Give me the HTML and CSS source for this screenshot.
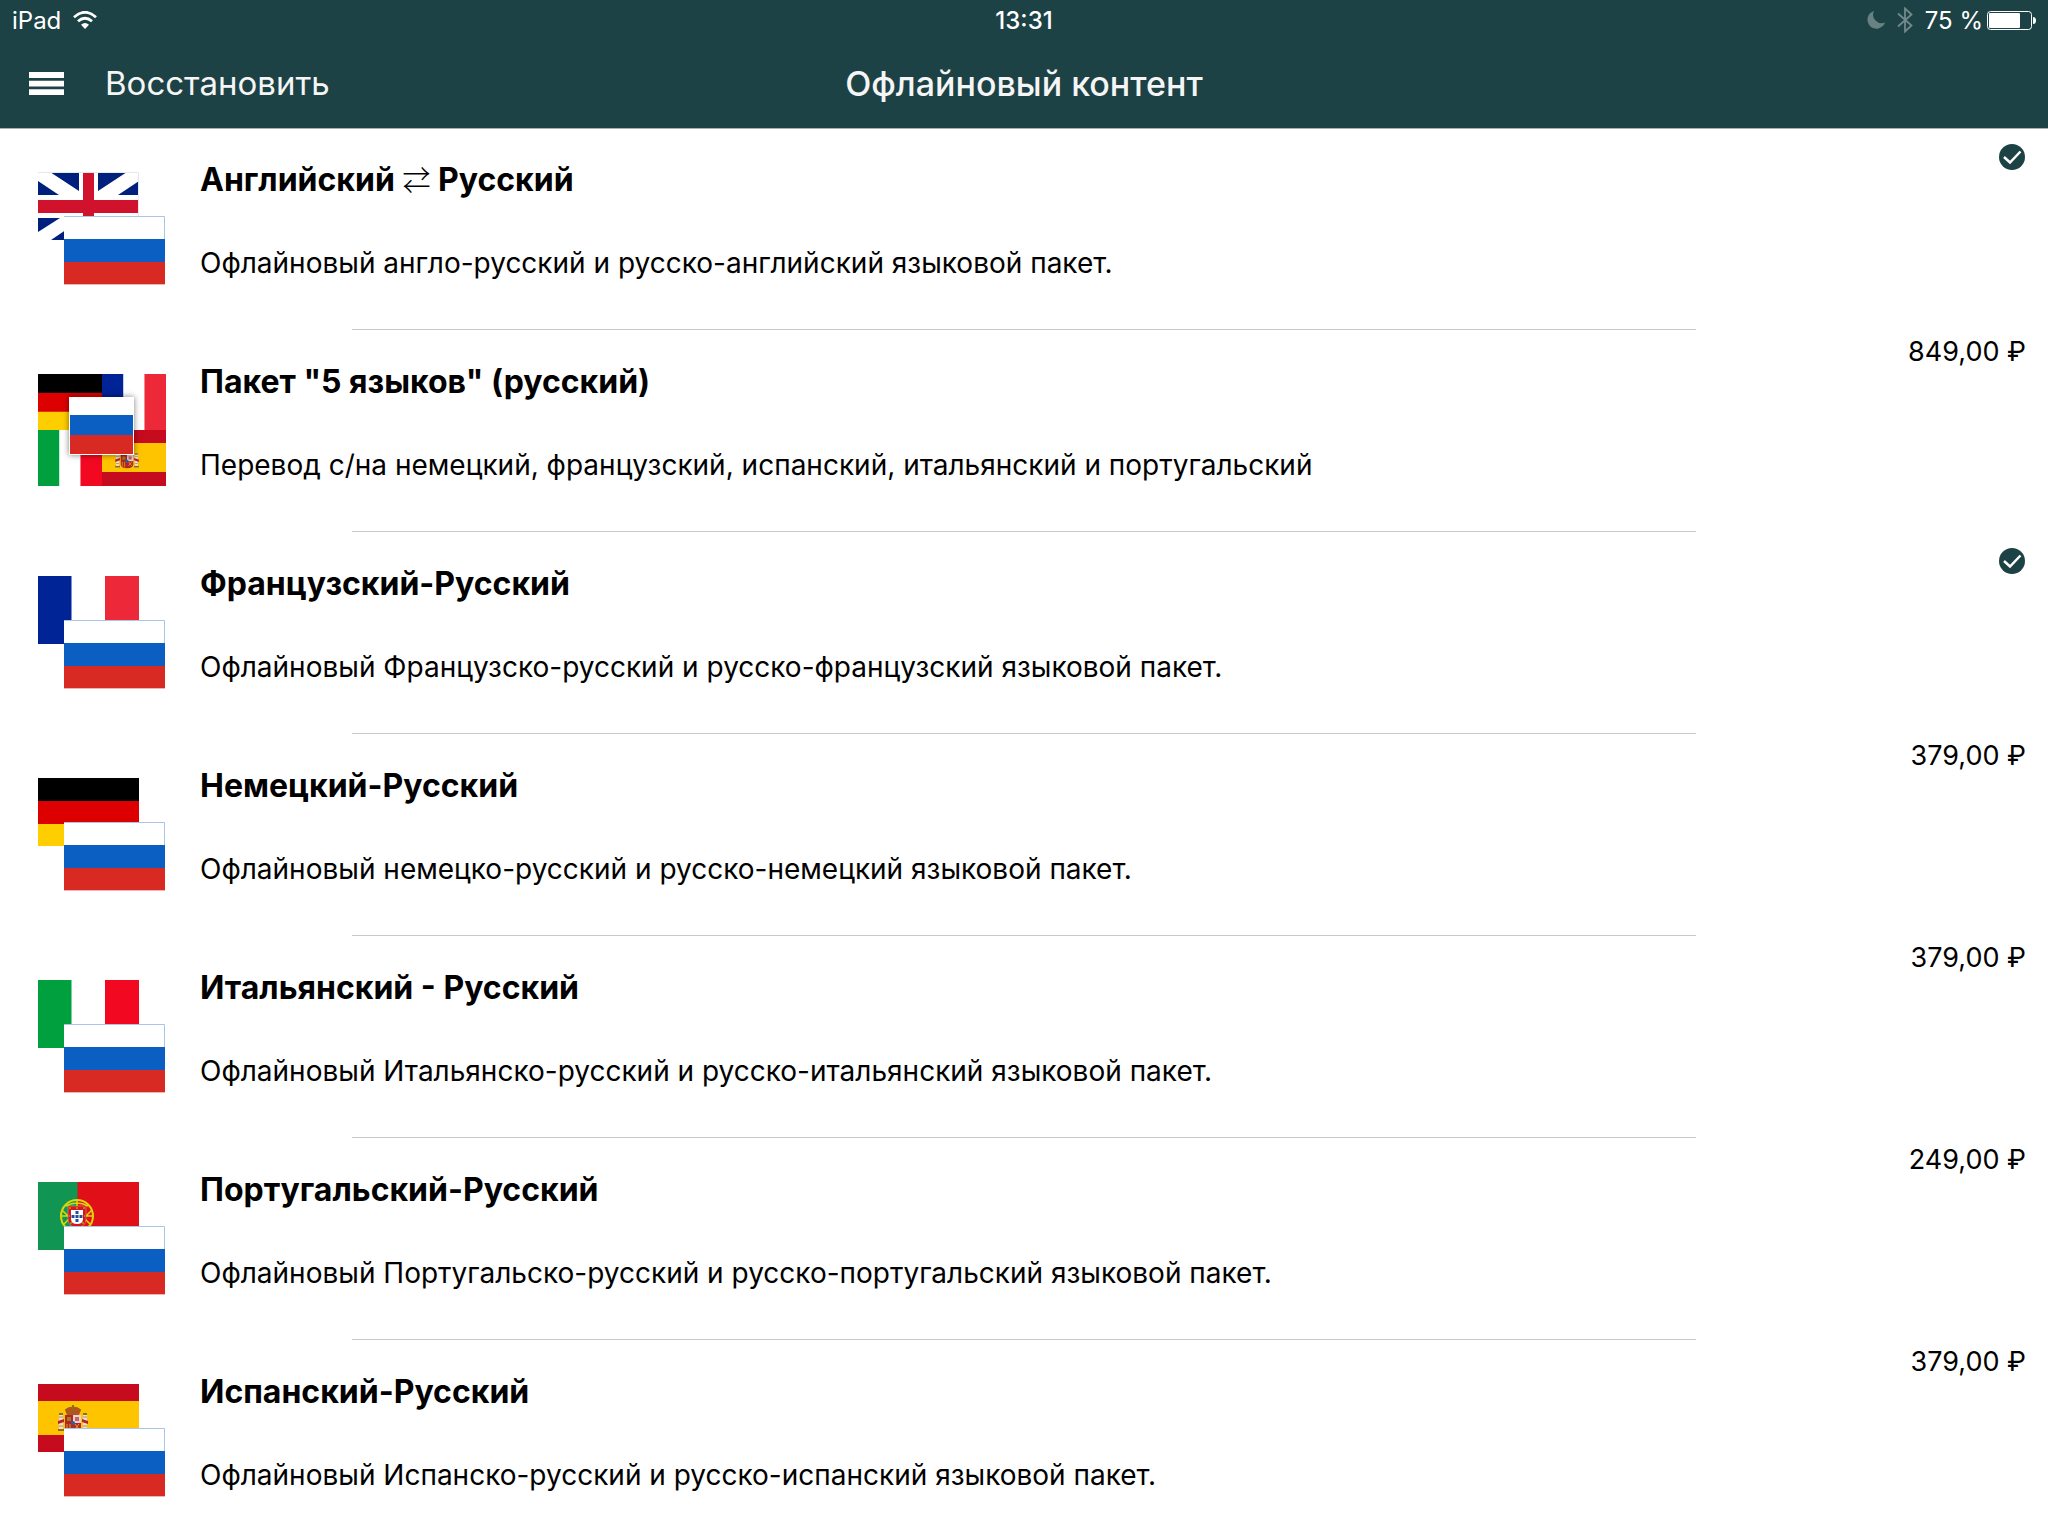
FILE: index.html
```html
<!DOCTYPE html>
<html lang="ru">
<head>
    <meta charset="UTF-8">
    <meta name="viewport" content="width=device-width, initial-scale=1.0">
    <title>Офлайновый контент</title>
    <link rel="stylesheet" href="styles.css">
</head>
<body>
    <!-- Общие символы для флагов и значков -->
    <svg class="sprite" aria-hidden="true">
        <symbol id="flag-ru" viewBox="0 0 101 69">
            <rect width="101" height="69" fill="#fff"/>
            <rect y="23" width="101" height="23" fill="#0b5fc3"/>
            <rect y="46" width="101" height="22" fill="#d82923"/>
            <path d="M0 .5H100.5V23" fill="none" stroke="#a9c5e8"/>
            <path d="M0 68.500H101" stroke="#efb5b2"/>
        </symbol>
        <symbol id="flag-gb" viewBox="0 0 101 68">
            <rect width="101" height="68" fill="#fff"/>
            <path d="M12 0H41V19ZM0 9L21 23H0ZM89 0H60V19ZM101 9L80 23H101ZM0 46H22L0 60ZM13 68L41 49V68Z" fill="#00207d"/>
            <path d="M45 0H56V68H45ZM0 28H101V41H0Z" fill="#d0122c"/>
            <path d="M0 .5H100.500V68" fill="none" stroke="#e6e8ee"/>
        </symbol>
        <symbol id="flag-de" viewBox="0 0 101 68" preserveAspectRatio="none">
            <rect width="101" height="23" fill="#000"/>
            <rect y="23" width="101" height="23" fill="#dd0000"/>
            <rect y="46" width="101" height="22" fill="#ffce00"/>
        </symbol>
        <symbol id="flag-fr" viewBox="0 0 101 68" preserveAspectRatio="none">
            <rect width="101" height="68" fill="#fff"/>
            <rect width="33.500" height="68" fill="#002395"/>
            <rect x="67" width="34" height="68" fill="#ed2939"/>
        </symbol>
        <symbol id="flag-it" viewBox="0 0 101 68" preserveAspectRatio="none">
            <rect width="101" height="68" fill="#fff"/>
            <rect width="33.500" height="68" fill="#00a03e"/>
            <rect x="67" width="34" height="68" fill="#f30822"/>
        </symbol>
        <symbol id="arms-es" viewBox="0 0 32 28">
            <path d="M2 8h4v2H2zM26 8h4v2h-4zM1 24h6v2H1zM25 24h6v2h-6z" fill="#8d6d22"/>
            <path d="M2 10h4v14H2zM26 10h4v14h-4z" fill="#e9dfd2"/>
            <path d="M2 12h4M26 12h4M2 21h4M26 21h4" stroke="#a88f80"/>
            <path d="M1 16l6-2v3l-6 2zM31 16l-6-2v3l6 2z" fill="#bb2025"/>
            <path d="M8 5q3-3 8-3t8 3l-2 5H10z" fill="#b5531c"/>
            <path d="M8 5q3-3 8-3t8 3M10 9h12" fill="none" stroke="#8d6d22"/>
            <path d="M15 0h2v5h-2z" fill="#8d6d22"/>
            <path d="M8 10h16v12q0 5-8 5t-8-5z" fill="#b42525"/>
            <path d="M16 10h8v8h-8z" fill="#eed2d0"/>
            <path d="M18 12h4v4h-4z" fill="#c9606c"/>
            <path d="M10 12h4v4h-4z" fill="#a67b22"/>
            <path d="M10 19v6M13 19v7M18 19l4 5M22 19l-4 5" stroke="#d8a51f"/>
            <circle cx="16" cy="18" r="2" fill="#2862a5"/>
        </symbol>
        <symbol id="flag-es" viewBox="0 0 101 68" preserveAspectRatio="none">
            <rect width="101" height="68" fill="#c60b1e"/>
            <rect y="17" width="101" height="34" fill="#ffc400"/>
            <use href="#arms-es" x="19" y="21" width="32" height="28"/>
        </symbol>
        <symbol id="flag-pt" viewBox="0 0 101 68">
            <rect width="101" height="68" fill="#e10f18"/>
            <rect width="39.500" height="68" fill="#119552"/>
            <g fill="none" stroke="#e0d40a" stroke-width="2">
                <circle cx="39" cy="34" r="16"/>
                <path d="M24 28l8 8-6 6M54 28l-8 8 6 6M39 18v32M23 34h32M28 24q11-6 22 0" stroke-width="1.500"/>
            </g>
            <path d="M30 24h18v13q0 8-9 8t-9-8z" fill="#d8141d" stroke="#e3a5a0" stroke-width=".5"/>
            <path d="M33 28h12v9q0 5-6 5t-6-5z" fill="#fff"/>
            <g fill="#1f4f9a">
                <rect x="37.500" y="29" width="3" height="3"/>
                <rect x="33.500" y="33" width="3" height="3"/>
                <rect x="37.500" y="33" width="3" height="3"/>
                <rect x="41.500" y="33" width="3" height="3"/>
                <rect x="37.500" y="37" width="3" height="3"/>
            </g>
            <path d="M31 25h2v2h-2zM38 25h2v2h-2zM45 25h2v2h-2zM31 33h1v2h-1zM46 33h1v2h-1zM32 40h2v2h-2zM44 40h2v2h-2z" fill="#9c8a0c"/>
        </symbol>
        <symbol id="check" viewBox="0 0 26 26">
            <circle cx="13" cy="13" r="13" fill="#1d4245"/>
            <path d="M5 13L11 18.500L21.500 7.500" fill="none" stroke="#fff" stroke-width="2.500"/>
        </symbol>
    </svg>

    <header class="header">
        <div class="status-bar">
            <div class="status-left">
                <span>iPad</span>
                <svg class="wifi" viewBox="0 0 24 18" aria-label="Wi-Fi">
                    <path d="M1 6.200Q12-3.600 23 6.200M5 10.300Q12 4.200 19 10.300" fill="none" stroke="#fff" stroke-width="2.800"/>
                    <path d="M12 18L8 13.700Q12 10.200 16 13.700Z" fill="#fff"/>
                </svg>
            </div>
            <time class="clock">13:31</time>
            <div class="status-right">
                <svg class="moon" viewBox="0 0 18 18" aria-hidden="true">
                    <path d="M7 0A9 9 0 1 0 18 11.500A8.500 8.500 0 0 1 7 0Z" fill="#688183"/>
                </svg>
                <svg class="bluetooth" viewBox="0 0 16 26" aria-hidden="true">
                    <path d="M1 6.500L14.500 18.500L8 24.500V1.500L14.500 7.500L1 19.500" fill="none" stroke="#728a8c" stroke-width="1.800"/>
                </svg>
                <span>75 %</span>
                <svg class="battery" viewBox="0 0 49 19" aria-hidden="true">
                    <rect x=".5" y=".5" width="44" height="18" rx="3" fill="none" stroke="#fff"/>
                    <rect x="2" y="2" width="31" height="15" rx="1" fill="#fff"/>
                    <path d="M46 6Q49 6 49 9.500T46 13Z" fill="#fff"/>
                </svg>
            </div>
        </div>
        <nav class="nav-bar">
            <div class="nav-left">
                <button class="menu-btn" type="button" aria-label="Меню">
                    <svg viewBox="0 0 35 23" aria-hidden="true">
                        <path d="M0 0H35V6H0ZM0 8.700H35V14.500H0ZM0 17.300H35V23H0Z" fill="#fff"/>
                    </svg>
                </button>
                <button class="restore-btn" type="button">Восстановить</button>
            </div>
            <h1>Офлайновый контент</h1>
        </nav>
    </header>

    <main>
        <ul class="pack-list">
            <li class="pack">
                <div class="flags">
                    <svg class="flag-back"><use href="#flag-gb"/></svg>
                    <svg class="flag-front"><use href="#flag-ru"/></svg>
                </div>
                <div class="pack-text">
                    <h2>Английский <span class="arrows">⇄</span> Русский</h2>
                    <p>Офлайновый англо-русский и русско-английский языковой пакет.</p>
                </div>
                <div class="pack-state">
                    <svg class="check" role="img" aria-label="Установлено"><use href="#check"/></svg>
                </div>
            </li>

            <li class="pack">
                <div class="flags">
                    <svg class="mosaic" viewBox="0 0 128 112">
                        <use href="#flag-de" width="64" height="56"/>
                        <use href="#flag-fr" x="64" width="64" height="56"/>
                        <use href="#flag-it" y="56" width="64" height="56"/>
                        <rect x="64" y="56" width="64" height="56" fill="#c60b1e"/>
                        <rect x="64" y="69" width="64" height="29" fill="#ffc400"/>
                        <use href="#arms-es" x="76" y="73" width="26" height="22"/>
                    </svg>
                    <svg class="flag-center" viewBox="0 0 65 58">
                        <rect width="65" height="58" fill="#fff"/>
                        <rect x="1" y="18" width="63" height="20" fill="#0b5fc3"/>
                        <rect x="1" y="38" width="63" height="19" fill="#d82923"/>
                    </svg>
                </div>
                <div class="pack-text">
                    <h2>Пакет "5 языков" (русский)</h2>
                    <p>Перевод с/на немецкий, французский, испанский, итальянский и португальский</p>
                </div>
                <div class="pack-state">849,00 ₽</div>
            </li>

            <li class="pack">
                <div class="flags">
                    <svg class="flag-back"><use href="#flag-fr"/></svg>
                    <svg class="flag-front"><use href="#flag-ru"/></svg>
                </div>
                <div class="pack-text">
                    <h2>Французский-Русский</h2>
                    <p>Офлайновый Французско-русский и русско-французский языковой пакет.</p>
                </div>
                <div class="pack-state">
                    <svg class="check" role="img" aria-label="Установлено"><use href="#check"/></svg>
                </div>
            </li>

            <li class="pack">
                <div class="flags">
                    <svg class="flag-back"><use href="#flag-de"/></svg>
                    <svg class="flag-front"><use href="#flag-ru"/></svg>
                </div>
                <div class="pack-text">
                    <h2>Немецкий-Русский</h2>
                    <p>Офлайновый немецко-русский и русско-немецкий языковой пакет.</p>
                </div>
                <div class="pack-state">379,00 ₽</div>
            </li>

            <li class="pack">
                <div class="flags">
                    <svg class="flag-back"><use href="#flag-it"/></svg>
                    <svg class="flag-front"><use href="#flag-ru"/></svg>
                </div>
                <div class="pack-text">
                    <h2>Итальянский - Русский</h2>
                    <p>Офлайновый Итальянско-русский и русско-итальянский языковой пакет.</p>
                </div>
                <div class="pack-state">379,00 ₽</div>
            </li>

            <li class="pack">
                <div class="flags">
                    <svg class="flag-back"><use href="#flag-pt"/></svg>
                    <svg class="flag-front"><use href="#flag-ru"/></svg>
                </div>
                <div class="pack-text">
                    <h2>Португальский-Русский</h2>
                    <p>Офлайновый Португальско-русский и русско-португальский языковой пакет.</p>
                </div>
                <div class="pack-state">249,00 ₽</div>
            </li>

            <li class="pack">
                <div class="flags">
                    <svg class="flag-back"><use href="#flag-es"/></svg>
                    <svg class="flag-front"><use href="#flag-ru"/></svg>
                </div>
                <div class="pack-text">
                    <h2>Испанский-Русский</h2>
                    <p>Офлайновый Испанско-русский и русско-испанский языковой пакет.</p>
                </div>
                <div class="pack-state">379,00 ₽</div>
            </li>
        </ul>
    </main>
</body>
</html>
```

FILE: styles.css
```css
* {
    margin: 0;
    padding: 0;
    box-sizing: border-box;
}

body {
    font-family: Inter, "Noto Sans", sans-serif;
    font-size: 28px;
    background: #fff;
    color: #000;
}

.sprite {
    position: absolute;
    width: 0;
    height: 0;
}

svg {
    display: block;
}

/* Шапка */
.header {
    background: #1d4245;
    color: #f5f5f5;
    border-bottom: 1px solid #a9aeb0;
}

.status-bar {
    display: grid;
    grid-template-columns: 1fr auto 1fr;
    align-items: center;
    height: 40px;
    padding: 0 12px;
    font-size: 24px;
    color: #fff;
}

.status-left,
.status-right {
    display: flex;
    align-items: center;
}

.status-left {
    gap: 12px;
}

.status-right {
    justify-content: flex-end;
    gap: 12px;
}

.clock {
    font-weight: 500;
}

.wifi {
    width: 24px;
    height: 18px;
}

.moon {
    width: 18px;
    height: 18px;
}

.bluetooth {
    width: 16px;
    height: 26px;
}

.battery {
    width: 49px;
    height: 19px;
    margin-left: -8px;
}

.nav-bar {
    display: grid;
    grid-template-columns: 1fr auto 1fr;
    align-items: center;
    height: 88px;
    padding: 0 29px 2px;
}

.nav-left {
    display: flex;
    align-items: center;
    gap: 41px;
}

.nav-bar button {
    background: none;
    border: none;
    color: inherit;
    font-family: inherit;
    font-size: 33px;
    cursor: pointer;
}

.menu-btn svg {
    width: 35px;
    height: 23px;
}

.nav-bar h1 {
    font-size: 34px;
    font-weight: 500;
}

/* Список пакетов */
.pack-list {
    list-style: none;
}

.pack {
    display: grid;
    grid-template-columns: 128px 1fr auto;
    column-gap: 34px;
    min-height: 202px;
    padding: 0 22px 0 38px;
    position: relative;
}

/* Разделитель не доходит до краёв строки */
.pack:not(:last-child)::after {
    content: '';
    position: absolute;
    left: 352px;
    right: 352px;
    bottom: 1px;
    height: 1px;
    background: #c8c8c8;
}

.flags {
    position: relative;
    height: 113px;
    margin-top: 43px;
}

.flag-back,
.flag-front {
    position: absolute;
    width: 101px;
}

.flag-back {
    top: 0;
    left: 0;
    height: 68px;
}

.flag-front {
    right: 1px;
    bottom: 0;
    height: 69px;
}

.mosaic {
    width: 128px;
    height: 112px;
}

.flag-center {
    position: absolute;
    top: 23px;
    left: 31px;
    width: 65px;
    height: 58px;
    box-shadow: 0 0 6px rgba(0, 0, 0, 0.5);
}

.pack-text {
    padding-top: 31px;
}

.pack-text h2 {
    font-size: 32px;
    line-height: 40px;
    font-weight: 700;
    margin-bottom: 45px;
}

.pack-text p {
    line-height: 36px;
}

.arrows {
    font-family: "Noto Sans CJK JP", sans-serif;
    font-size: 28px;
    font-weight: 300;
    line-height: 1;
}

.pack-state {
    padding-top: 3px;
    font-size: 27px;
    line-height: 36px;
}

.check {
    width: 26px;
    height: 26px;
    margin: 12px 1px 0 0;
}
```
